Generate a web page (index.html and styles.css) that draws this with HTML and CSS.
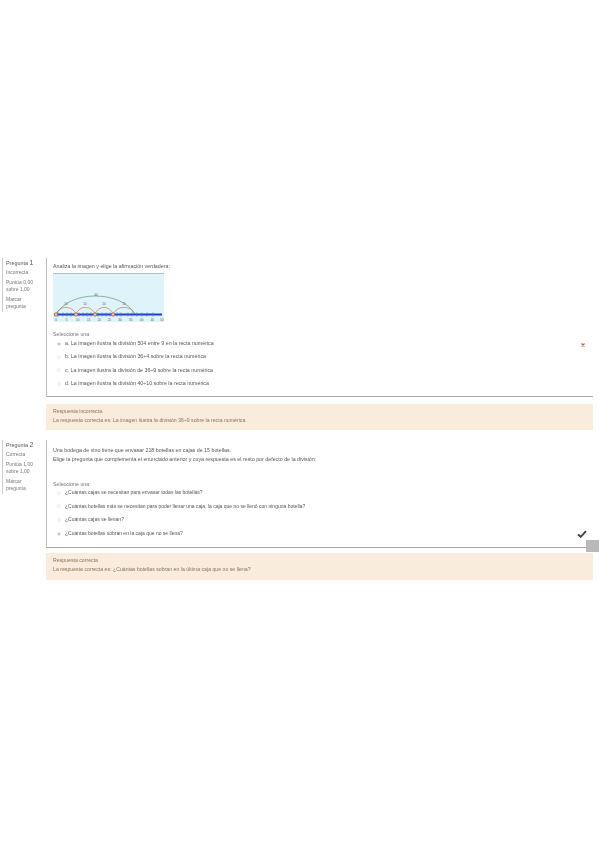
FILE: index.html
```html
<!DOCTYPE html>
<html lang="es">
<head>
  <meta charset="UTF-8">
  <title>Cuestionario</title>
  <link rel="stylesheet" href="styles.css">
</head>
<body>
  <div class="page">
    <div class="question first">
      <div class="info">
        <h3>Pregunta <b>1</b></h3>
        <p>Incorrecta</p>
        <p>Puntúa 0,00<br>sobre 1,00</p>
        <p>Marcar<br>pregunta</p>
      </div>
      <div class="content">
        <div class="card">
          <p class="text">Analiza la imagen y elige la afirmación verdadera:</p>
          <svg class="figure" viewBox="0 0 111 49">
            <rect width="111" height="49" fill="#def3fa"/>
            <path d="M0 .4H111" stroke="#9aa" stroke-width=".8"/>
            <path d="M3 41.5C10 29 26 23 42 23S76 29 82 41.5" fill="none" stroke="#4f8a5a" stroke-width=".6"/>
            <path d="M3 41.5C6 32 20 32 23 41.5M23 41.5C26 32 39 32 42 41.5M42 41.5C45 32 57 32 60 41.5M60 41.5C64 32 78 32 82 41.5" fill="none" stroke="#c8623a" stroke-width=".6"/>
            <path d="M1 41.5H109" stroke="#1f3fd0" stroke-width="2"/>
            <path d="M5 39.5V43.5M10 39.5V43.5M14 39.5V43.5M18 39.5V43.5M26 39.5V43.5M30 39.5V43.5M34 39.5V43.5M38 39.5V43.5M45 39.5V43.5M49 39.5V43.5M53 39.5V43.5M57 39.5V43.5M64 39.5V43.5M68 39.5V43.5M75 39.5V43.5M79 39.5V43.5M84 39.5V43.5M89 39.5V43.5M94 39.5V43.5M100 39.5V43.5" stroke="#4a66d8" stroke-width=".7"/>
            <g fill="#e9c9a8" stroke="#9a5a35" stroke-width=".7">
              <circle cx="3" cy="41.5" r="1.7"/>
              <circle cx="23" cy="41.5" r="1.7"/>
              <circle cx="42" cy="41.5" r="1.7"/>
              <circle cx="60" cy="41.5" r="1.7"/>
            </g>
            <g class="figure-labels">
              <text x="13" y="32">10</text>
              <text x="32" y="32">10</text>
              <text x="51" y="32">10</text>
              <text x="71" y="32">10</text>
              <text x="43" y="22.5">40</text>
              <text x="3" y="47.5">0</text>
              <text x="13.7" y="47.5">5</text>
              <text x="24.7" y="47.5">10</text>
              <text x="35.7" y="47.5">15</text>
              <text x="46.3" y="47.5">20</text>
              <text x="56.3" y="47.5">25</text>
              <text x="67" y="47.5">30</text>
              <text x="77.7" y="47.5">35</text>
              <text x="88.7" y="47.5">40</text>
              <text x="99.3" y="47.5">45</text>
              <text x="109" y="47.5">50</text>
            </g>
          </svg>
          <p class="select">Seleccione una:</p>
          <ul class="options spaced">
            <li><span class="radio checked"></span>a. La imagen ilustra la división 504 entre 9 en la recta numérica</li>
            <li><span class="radio"></span>b. La imagen ilustra la división 36÷4 sobre la recta numérica</li>
            <li><span class="radio"></span>c. La imagen ilustra la división de 36÷9 sobre la recta numérica</li>
            <li><span class="radio"></span>d. La imagen ilustra la división 40÷10 sobre la recta numérica</li>
          </ul>
          <svg class="mark cross" viewBox="0 0 8 8"><path d="M1 1L7 7M7 1L1 7" stroke="#a8704a" stroke-width="2.4"/></svg>
        </div>
        <div class="feedback">
          <p>Respuesta incorrecta.</p>
          <p>La respuesta correcta es: La imagen ilustra la división 36÷9 sobre la recta numérica</p>
        </div>
      </div>
    </div>

    <div class="question second">
      <div class="info">
        <h3>Pregunta <b>2</b></h3>
        <p>Correcta</p>
        <p>Puntúa 1,00<br>sobre 1,00</p>
        <p>Marcar<br>pregunta</p>
      </div>
      <div class="content">
        <div class="card">
          <p class="text">Una bodega de vino tiene que envasar 218 botellas en cajas de 15 botellas.</p>
          <p class="text">Elige la pregunta que complementa el enunciado anterior y cuya respuesta es el resto por defecto de la división:</p>
          <p class="select gap">Seleccione una:</p>
          <ul class="options">
            <li><span class="radio"></span>¿Cuántas cajas se necesitan para envasar todas las botellas?</li>
            <li><span class="radio"></span>¿Cuántas botellas más se necesitan para poder llenar una caja, la caja que no se llenó con ninguna botella?</li>
            <li><span class="radio"></span>¿Cuántas cajas se llenan?</li>
            <li><span class="radio checked"></span>¿Cuántas botellas sobran en la caja que no se llena?</li>
          </ul>
          <svg class="mark check" viewBox="0 0 12 10"><path d="M1 5.5L4.5 8.5L11 1.5" fill="none" stroke="#3d4540" stroke-width="2.4"/></svg>
        </div>
        <div class="feedback">
          <p>Respuesta correcta</p>
          <p>La respuesta correcta es: ¿Cuántas botellas sobran en la última caja que no se llena?</p>
        </div>
      </div>
    </div>
    <div class="top-btn"></div>
  </div>
</body>
</html>
```
FILE: styles.css
```css
* {
  margin: 0;
  padding: 0;
  box-sizing: border-box;
}
body {
  background: #fff;
  color: #666;
  font-family: "Liberation Sans", Arial, sans-serif;
  font-size: 5.3px;
  line-height: 9px;
}
.page {
  position: relative;
  height: 848px;
  padding: 258px 6px 0 2px;
  filter: blur(.6px);
}
.question {
  display: flex;
  align-items: flex-start;
}
.second {
  margin-top: 10px;
}
.info {
  width: 44px;
  flex-shrink: 0;
  padding: 1px 0 1px 3px;
  border-left: 1px solid #ccc;
  line-height: 7.5px;
  color: #777;
  font-size: 5px;
}
.info h3 {
  font-weight: normal;
  font-size: 5.4px;
  line-height: 8px;
  color: #555;
}
.info h3 b {
  font-size: 7px;
  font-weight: normal;
}
.info p {
  margin-top: 2px;
}
.content {
  flex: 1;
}
.card {
  position: relative;
  height: 139px;
  padding: 4px 0 0 6px;
  border-left: 1px solid #bbb;
  border-bottom: 1px solid #aaa;
  color: #555;
}
.second .card {
  height: 108px;
  padding-top: 6px;
}
.figure {
  display: block;
  width: 111px;
  height: 49px;
  margin-top: 2px;
}
.figure-labels text {
  font-size: 3px;
  fill: #555;
  text-anchor: middle;
  font-family: "Liberation Sans", Arial, sans-serif;
}
.select {
  margin-top: 8px;
  color: #777;
}
.select.gap {
  margin-top: 16px;
}
.options {
  list-style: none;
}
.options li {
  display: flex;
  align-items: center;
  height: 13.3px;
  padding-left: 4px;
  white-space: nowrap;
}
.options.spaced {
  margin-top: -2px;
}
.second .options {
  margin-top: -3px;
  font-size: 5px;
}
.second .options li {
  height: 13.6px;
}
.radio {
  width: 4px;
  height: 4px;
  margin-right: 4px;
  border: 1px solid #e8e8e8;
  border-radius: 50%;
  flex-shrink: 0;
}
.radio.checked {
  background: #bbb;
}
.mark {
  position: absolute;
  display: block;
}
.cross {
  right: 8px;
  top: 85px;
  width: 4px;
  height: 4px;
}
.check {
  right: 6px;
  bottom: 9px;
  width: 10px;
  height: 8px;
}
.feedback {
  height: 26px;
  margin-top: 7px;
  padding: 3px 7px 4px;
  background: #f9ecdc;
  color: #8a7459;
  font-size: 5.2px;
}
.second .feedback {
  height: 27px;
  margin-top: 5px;
}
.top-btn {
  position: absolute;
  left: 586px;
  top: 540px;
  width: 13px;
  height: 12px;
  background: #b9b9b9;
}
```
